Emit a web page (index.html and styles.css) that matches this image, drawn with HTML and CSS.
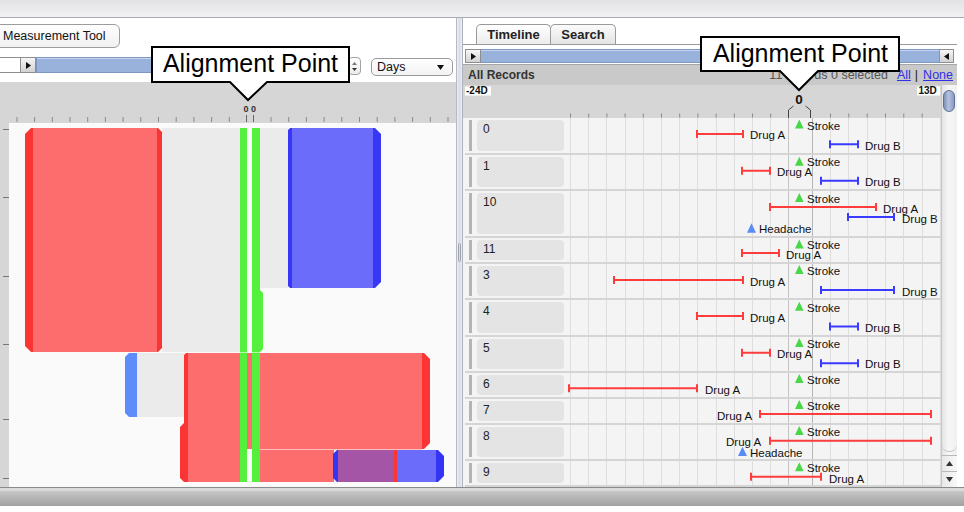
FILE: index.html
```html
<!DOCTYPE html>
<html>
<head>
<meta charset="utf-8">
<title>Timeline</title>
<link rel="stylesheet" href="styles.css">
</head>
<body>
<div class="app">
  <div class="topbar"></div>
  <div class="main">
    <section class="left">
      <div class="toolrow"><button class="mtool">Measurement Tool</button></div>
      <div class="lslider">
        <div class="field"></div>
        <div class="arrowbtn w15"><svg width="5" height="7" viewBox="0 0 5 7"><path d="M0 0L5 3.5L0 7Z" fill="#111"/></svg></div>
        <div class="bluebar lbar"></div>
        <div class="spinner">
          <svg width="5" height="3" viewBox="0 0 5 3"><path d="M0 3L2.5 0L5 3Z" fill="#777"/></svg>
          <svg width="5" height="3" viewBox="0 0 5 3"><path d="M0 0L2.5 3L5 0Z" fill="#333"/></svg>
        </div>
        <div class="select"><span>Days</span><svg width="7" height="5" viewBox="0 0 7 5"><path d="M0 0H7L3.5 5Z" fill="#111"/></svg></div>
      </div>
      <svg class="lruler" viewBox="0 82 456 40" width="456" height="40">
        <rect x="0" y="82" width="456" height="40" fill="#d6d6d6"/>
        <text class="z" x="246" y="112.4">0</text>
        <text class="z" x="253.6" y="112.4">0</text>
        <path stroke="#8a8a8a" stroke-width="1" fill="none" d="M17 117V122M34.6 117V122M52.3 117V122M70 117V122M87.7 117V122M105.4 117V122M123.1 117V122M140.8 117V122M158.5 117V122M176.2 117V122M193.9 117V122M211.6 117V122M229.3 117V122M271 117V122M288.7 117V122M306.4 117V122M324.1 117V122M341.8 117V122M359.5 117V122M377.2 117V122M394.9 117V122M412.6 117V122M430.3 117V122M448 117V122"/>
        <path stroke="#666" stroke-width="1" fill="none" d="M246.5 115V122M253.5 115V122"/>
      </svg>
      <svg class="lchart" viewBox="0 122 456 365" width="456" height="365">
        <rect x="0" y="122" width="456" height="365" fill="#d6d6d6"/>
        <rect x="9" y="123" width="447" height="364" fill="#fafafa"/>
        <path stroke="#777" stroke-width="1" fill="none" d="M3 129.5H9M3 197.5H9M3 276.5H9M3 344.5H9M3 419.5H9M3 478.5H9"/>
        <rect x="162" y="128" width="78" height="224" fill="#ebebeb"/>
        <rect x="260" y="128" width="28" height="160" fill="#ebebeb"/>
        <rect x="137" y="353" width="47" height="64" fill="#ebebeb"/>
        <path fill="#fb3434" d="M31 128H158L162 132V348L158 352H31L25 346V134Z"/>
        <rect x="33" y="128" width="124" height="224" fill="#fd6d6d"/>
        <path fill="#3838f4" d="M290 128H375L381 134V282L375 288H290L288 286V130Z"/>
        <rect x="292" y="128" width="81" height="160" fill="#6c6cfa"/>
        <path fill="#5f8cfb" d="M129 353H137V417H129L125 413V357Z"/>
        <path fill="#fb3434" d="M186 353H424L430 359V443L424 449H184V355Z"/>
        <path fill="#fb3434" d="M184 423H188V482H184L180 478V427Z"/>
        <rect x="188" y="353" width="234" height="96" fill="#fd6d6d"/>
        <rect x="188" y="449" width="52" height="33" fill="#fd6d6d"/>
        <rect x="260" y="450" width="74" height="32" fill="#fd6d6d"/>
        <rect x="260" y="449" width="162" height="1" fill="#fcc0c0"/>
        <path fill="#3434f4" d="M337 450H338V482H337L333 478V454Z"/>
        <rect x="338" y="450" width="56" height="32" fill="#a555a6"/>
        <rect x="394" y="450" width="3" height="32" fill="#fb3434"/>
        <rect x="397" y="450" width="39" height="32" fill="#6c6cfa"/>
        <path fill="#3434f4" d="M436 450H438L444 456V476L438 482H436Z"/>
        <rect x="240" y="128" width="7" height="354" fill="#55ef3d"/>
        <rect x="252" y="128" width="8" height="354" fill="#55ef3d"/>
        <path fill="#55ef3d" d="M260 290L263 293V349L260 352Z"/>
        <rect x="240" y="352" width="7" height="1" fill="#b5f7a8"/>
        <rect x="252" y="352" width="8" height="1" fill="#b5f7a8"/>
      </svg>
    </section>
    <div class="divider"><span class="dgrip"></span></div>
    <section class="right">
      <div class="tabs">
        <div class="tab t1">Timeline</div>
        <div class="tab t2">Search</div>
      </div>
      <div class="rslider">
        <div class="arrowbtn w16"><svg width="5" height="7" viewBox="0 0 5 7"><path d="M0 0L5 3.5L0 7Z" fill="#111"/></svg></div>
        <div class="bluebar rbar"></div>
        <div class="arrowbtn w14"><svg width="5" height="7" viewBox="0 0 5 7"><path d="M5 0L0 3.5L5 7Z" fill="#111"/></svg></div>
      </div>
      <div class="rheader">
        <span class="title">All Records</span>
        <span class="count">11 records 0 selected</span>
        <a class="lnk">All</a><span class="bar">|</span><a class="lnk">None</a>
      </div>
      <div class="rbody">
        <div class="rcontent">
          <svg class="raxis" viewBox="463 85 478 33" width="478" height="33">
            <rect x="463" y="85" width="478" height="33" fill="#d6d6d6"/>
            <rect x="465" y="86.5" width="26" height="9" fill="#fff"/>
            <text class="ax" x="466" y="94.3">-24D</text>
            <rect x="917" y="86.5" width="23" height="9" fill="#fff"/>
            <text class="ax" x="918.5" y="94.3">13D</text>
            <text class="zero" x="799" y="104">0</text>
            <path stroke="#444" stroke-width="1" fill="none" d="M793.5 106L788.5 110V118M805.5 106L810.5 110V118"/>
            <path stroke="#8a8a8a" stroke-width="1" fill="none" d="M570.5 113.5V117.5M588.7 113.5V117.5M606.9 113.5V117.5M625.1 113.5V117.5M643.3 113.5V117.5M661.5 113.5V117.5M679.7 113.5V117.5M697.9 113.5V117.5M716.1 113.5V117.5M734.3 113.5V117.5M752.5 113.5V117.5M770.7 113.5V117.5M830.5 113.5V117.5M848.8 113.5V117.5M867.2 113.5V117.5M885.5 113.5V117.5M903.8 113.5V117.5M922.2 113.5V117.5"/>
          </svg>
          <div class="rows">
            <div class="row r37"><i class="grip"></i><span class="label">0</span>
              <svg class="track" viewBox="566 0 375 24" width="375" height="24">
                <path class="tg" d="M795 10.5h8.6l-4.3-9z"/><text x="807" y="11.5">Stroke</text>
                <path class="rr" d="M697 16H743M697 12v8M743 12v8"/><text x="750" y="21.3">Drug A</text>
                <path class="rb" d="M830 26.3H858M830 22.3v8M858 22.3v8"/><text x="865" y="31.5">Drug B</text>
              </svg></div>
            <div class="row r36"><i class="grip"></i><span class="label">1</span>
              <svg class="track" viewBox="566 0 375 24" width="375" height="24">
                <path class="tg" d="M795 10.7h8.6l-4.3-9z"/><text x="807" y="11">Stroke</text>
                <path class="rr" d="M742 15.7H770M742 11.7v8M770 11.7v8"/><text x="777" y="21">Drug A</text>
                <path class="rb" d="M821 25.7H858M821 21.7v8M858 21.7v8"/><text x="865" y="31">Drug B</text>
              </svg></div>
            <div class="row r47"><i class="grip"></i><span class="label">10</span>
              <svg class="track" viewBox="566 0 375 24" width="375" height="24">
                <path class="tg" d="M795 11h8.6l-4.3-9z"/><text x="807" y="11.5">Stroke</text>
                <path class="rr" d="M770 16H876M770 12v8M876 12v8"/><text x="883" y="21.5">Drug A</text>
                <path class="rb" d="M848 26H894M848 22v8M894 22v8"/><text x="902" y="31.8">Drug B</text>
                <path class="tb" d="M747 41.7h9l-4.5-9.4z"/><text x="759" y="42">Headache</text>
              </svg></div>
            <div class="row r26"><i class="grip"></i><span class="label">11</span>
              <svg class="track" viewBox="566 0 375 24" width="375" height="24">
                <path class="tg" d="M795 10.5h8.6l-4.3-9z"/><text x="807" y="11">Stroke</text>
                <path class="rr" d="M742 15H779M742 11v8M779 11v8"/><text x="786" y="20.8">Drug A</text>
              </svg></div>
            <div class="row r36"><i class="grip"></i><span class="label">3</span>
              <svg class="track" viewBox="566 0 375 24" width="375" height="24">
                <path class="tg" d="M795 10h8.6l-4.3-9z"/><text x="807" y="11">Stroke</text>
                <path class="rr" d="M614 16H743M614 12v8M743 12v8"/><text x="750" y="21.7">Drug A</text>
                <path class="rb" d="M821 26H894M821 22v8M894 22v8"/><text x="902" y="31.7">Drug B</text>
              </svg></div>
            <div class="row r37"><i class="grip"></i><span class="label">4</span>
              <svg class="track" viewBox="566 0 375 24" width="375" height="24">
                <path class="tg" d="M795 10.7h8.6l-4.3-9z"/><text x="807" y="11.5">Stroke</text>
                <path class="rr" d="M697 16H743M697 12v8M743 12v8"/><text x="750" y="21.7">Drug A</text>
                <path class="rb" d="M830 26.5H858M830 22.5v8M858 22.5v8"/><text x="865" y="32">Drug B</text>
              </svg></div>
            <div class="row r36"><i class="grip"></i><span class="label">5</span>
              <svg class="track" viewBox="566 0 375 24" width="375" height="24">
                <path class="tg" d="M795 10h8.6l-4.3-9z"/><text x="807" y="10.8">Stroke</text>
                <path class="rr" d="M742 15.7H770M742 11.7v8M770 11.7v8"/><text x="777" y="21.2">Drug A</text>
                <path class="rb" d="M821 26.3H858M821 22.3v8M858 22.3v8"/><text x="865" y="31.4">Drug B</text>
              </svg></div>
            <div class="row r26"><i class="grip"></i><span class="label">6</span>
              <svg class="track" viewBox="566 0 375 24" width="375" height="24">
                <path class="tg" d="M795 10h8.6l-4.3-9z"/><text x="807" y="11">Stroke</text>
                <path class="rr" d="M569 15.3H697M569 11.3v8M697 11.3v8"/><text x="705" y="21">Drug A</text>
              </svg></div>
            <div class="row r26"><i class="grip"></i><span class="label">7</span>
              <svg class="track" viewBox="566 0 375 24" width="375" height="24">
                <path class="tg" d="M795 10h8.6l-4.3-9z"/><text x="807" y="11">Stroke</text>
                <path class="rr" d="M760 15H931M760 11v8M931 11v8"/><text x="717" y="21">Drug A</text>
              </svg></div>
            <div class="row r36"><i class="grip"></i><span class="label">8</span>
              <svg class="track" viewBox="566 0 375 24" width="375" height="24">
                <path class="tg" d="M795 10h8.6l-4.3-9z"/><text x="807" y="11">Stroke</text>
                <path class="rr" d="M770 15.7H931M770 11.7v8M931 11.7v8"/><text x="726" y="21">Drug A</text>
                <path class="tb" d="M738 31h9l-4.5-9.3z"/><text x="750" y="31.8">Headache</text>
              </svg></div>
            <div class="row r26"><i class="grip"></i><span class="label">9</span>
              <svg class="track" viewBox="566 0 375 24" width="375" height="24">
                <path class="tg" d="M795 10.3h8.6l-4.3-9z"/><text x="807" y="11.3">Stroke</text>
                <path class="rr" d="M751 15.7H821M751 11.7v8M821 11.7v8"/><text x="829" y="21.5">Drug A</text>
              </svg></div>
          </div>
        </div>
        <div class="vscroll">
          <div class="thumb"></div>
          <div class="sgap"></div>
          <div class="sbtn"><svg width="7" height="5" viewBox="0 0 7 5"><path d="M0 5L3.5 0L7 5Z" fill="#333"/></svg></div>
          <div class="sbtn"><svg width="7" height="5" viewBox="0 0 7 5"><path d="M0 0H7L3.5 5Z" fill="#333"/></svg></div>
        </div>
      </div>
    </section>
    <div class="redge"></div>
  </div>
  <div class="bottombar"></div>

  <svg class="callout c1" viewBox="0 0 202 57" width="202" height="57">
    <path d="M2 2H199V37H117L98 55L80 37H2Z"/>
    <text x="100.5" y="26.7">Alignment Point</text>
  </svg>
  <svg class="callout c2" viewBox="0 0 202 57" width="202" height="57">
    <path d="M2 2H200V36H119L100 55L81 36H2Z"/>
    <text x="101.5" y="26.5">Alignment Point</text>
  </svg>
</div>
</body>
</html>
```

FILE: styles.css
```css
* { box-sizing: border-box; margin: 0; padding: 0; }
html, body { width: 964px; height: 512px; overflow: hidden; background: #fff; }
body { font-family: "Liberation Sans", Arial, sans-serif; color: #222; }

.app { position: relative; width: 964px; height: 512px; display: flex; flex-direction: column; }

.topbar { height: 18px; flex: none; background: linear-gradient(#e2e2e4, #f1f1f3); border-bottom: 1px solid #a9a9b1; }

.main { height: 469px; flex: none; display: flex; }

/* ---------- left panel ---------- */
.left { width: 456px; flex: none; display: flex; flex-direction: column; overflow: hidden; background: #fff; }
.toolrow { height: 30px; flex: none; padding-top: 6px; }
.mtool {
  display: block; height: 24px; width: 132px; margin-left: -12px; padding-left: 14px;
  text-align: left; border: 1px solid #9c9c9c; border-radius: 6px;
  background: linear-gradient(#ffffff, #f0f0f0);
  font: 12.5px "Liberation Sans", Arial, sans-serif; color: #111;
}
.lslider { height: 34px; flex: none; display: flex; align-items: flex-start; padding-top: 9px; }
.field { width: 21px; height: 16px; border: 1px solid #8e8e8e; border-left: none; background: #fff; }
.arrowbtn {
  display: flex; align-items: center; justify-content: center; flex: none;
  border: 1px solid #8e8e8e; background: linear-gradient(#f6f6f6, #d2d2d2);
}
.arrowbtn svg { display: block; }
.w15 { width: 15px; height: 16px; border-left: none; }
.bluebar { flex: none; background: #98b2dc; border: 1px solid #7d97c2; box-shadow: inset 0 1px #c6d6ef; }
.lbar { width: 304px; height: 16px; }
.spinner {
  width: 13px; height: 18px; margin-left: 8px; border: 1px solid #a3a3a3; border-radius: 4px;
  background: linear-gradient(#ffffff, #ececec);
  display: flex; flex-direction: column; align-items: center; justify-content: space-around; padding: 2px 0;
}
.spinner svg { display: block; }
.select {
  width: 82px; height: 18px; margin-left: 10px; margin-top: 1px;
  border: 1px solid #9a9a9a; border-radius: 5px; background: linear-gradient(#ffffff, #f3f3f3);
  display: flex; align-items: center; justify-content: space-between; padding: 0 8px 0 5px;
  font-size: 12.5px; color: #111;
}
.select svg { display: block; }
.lruler, .lchart { display: block; flex: none; }
.z { font: bold 9px "Liberation Sans", Arial, sans-serif; fill: #333; text-anchor: middle; }

/* ---------- divider ---------- */
.divider {
  width: 7px; flex: none; border-left: 1px solid #b6bac4; border-right: 1px solid #aeb2bd;
  background: linear-gradient(90deg, #eceef3, #d9dde5 50%, #eceef3);
  display: flex; justify-content: center; padding-top: 225px;
}
.dgrip { display: block; width: 3px; height: 19px; border: 1px solid #9ea3ae; border-radius: 2px; }

/* ---------- right panel ---------- */
.right { width: 494px; flex: none; display: flex; flex-direction: column; background: #fff; }
.tabs { height: 27px; flex: none; display: flex; align-items: flex-end; padding-left: 13px; border-bottom: 1px solid #9a9a9a; }
.tab {
  height: 20px; border: 1px solid #9a9a9a; border-bottom: none; border-radius: 5px 5px 0 0;
  background: linear-gradient(#fbfbfb, #e4e4e4);
  font: bold 13px "Liberation Sans", Arial, sans-serif; line-height: 19px; text-align: center; color: #222;
}
.t1 { width: 75px; background: linear-gradient(#ffffff, #ececec); }
.t2 { width: 66px; margin-left: -1px; }

.rslider { height: 19px; flex: none; display: flex; align-items: flex-start; padding: 4px 0 0 2px; }
.w16 { width: 16px; height: 14px; }
.w14 { width: 14px; height: 14px; border-left: none; }
.rbar { width: 459px; height: 14px; border-left: none; }

.rheader {
  height: 21px; flex: none; display: flex; align-items: center;
  background: #c9c9c9; border-top: 1px solid #a6a6a6; padding: 0 4px 0 5px; font-size: 12.5px;
}
.rheader .title { font-weight: bold; font-size: 12px; color: #333; margin-right: auto; }
.count { color: #555; margin-right: 9px; }
.lnk { color: #2f2fe6; text-decoration: underline; }
.rheader .bar { color: #222; margin: 0 5px 0 4px; }

.rbody { height: 402px; flex: none; display: flex; }
.rcontent { width: 478px; flex: none; display: flex; flex-direction: column; }
.raxis { display: block; flex: none; }
.ax { font: bold 10px "Liberation Sans", Arial, sans-serif; fill: #111; }
.zero { font: bold 13.5px "Liberation Sans", Arial, sans-serif; fill: #111; text-anchor: middle; }

.rows {
  height: 369px; flex: none; overflow: hidden; padding-left: 2px;
  background-color: #f4f4f4;
  background-image:
    linear-gradient(90deg, transparent 325px, #c4c4c4 325px 326px, transparent 326px 349px, #b6b6b6 349px 350px, transparent 350px),
    repeating-linear-gradient(90deg, #dedede 0 1px, transparent 1px 18.2px),
    repeating-linear-gradient(90deg, #dedede 0 1px, transparent 1px 18.33px);
  background-position: 0 0, 107px 0, 367px 0;
  background-size: 100% 100%, 221px 100%, 111px 100%;
  background-repeat: no-repeat;
}
.row { display: flex; align-items: stretch; border-bottom: 2px solid #d5d5d5; }
.r25 { height: 25px; }
.r26 { height: 26px; }
.r36 { height: 36px; }
.r37 { height: 37px; }
.r47 { height: 47px; }
.grip { display: block; width: 3px; margin: 2px 0 2px 4px; background: #b4b4b4; flex: none; }
.label {
  width: 87px; flex: none; margin: 2px 0 2px 5px; padding: 2px 0 0 6px;
  background: #e4e4e4; border-radius: 4px; font-size: 12px; line-height: 14px; color: #222;
}
.track { display: block; flex: none; margin-left: 2px; overflow: visible; }
.track text { font: 11.5px "Liberation Sans", Arial, sans-serif; fill: #111; }
.tg { fill: #46d846; }
.tb { fill: #5a8cf5; }
.rr { stroke: #ff3c3c; stroke-width: 2; fill: none; }
.rb { stroke: #3b3bff; stroke-width: 2; fill: none; }

.vscroll {
  width: 16px; flex: none; display: flex; flex-direction: column;
  border-left: 1px solid #c6c6c6; background: linear-gradient(90deg, #e4e4e4, #f7f7f7 45%, #efefef);
}
.thumb {
  height: 22px; flex: none; margin: 5px 2px 0 1px; border-radius: 7px; border: 1px solid #5f7199;
  background: linear-gradient(90deg, #7f91b8, #b3c1dc 45%, #8a9bc0);
}
.sgap { flex: 1; border-bottom: 1px solid #c4c4c4; border-radius: 0 0 7px 7px; margin-bottom: 3px; }
.sbtn {
  height: 16px; flex: none; display: flex; align-items: center; justify-content: center;
  border-top: 1px solid #b9b9b9; background: linear-gradient(90deg, #e8e8e8, #f8f8f8);
}
.sbtn svg { display: block; }

.redge { width: 7px; flex: none; background: #fff; }

.bottombar { height: 19px; flex: none; background: linear-gradient(#8a8a8a 0 1px, #dadada 1px 4px, #c6c6c6 4px, #a2a2a2); }

/* ---------- callouts (overlay) ---------- */
.callout { position: absolute; overflow: visible; }
.c1 { left: 150px; top: 45px; }
.c2 { left: 699px; top: 35px; }
.callout path { fill: #fff; stroke: #000; stroke-width: 2; }
.callout text { font: 25px "Liberation Sans", Arial, sans-serif; fill: #000; text-anchor: middle; }
```
